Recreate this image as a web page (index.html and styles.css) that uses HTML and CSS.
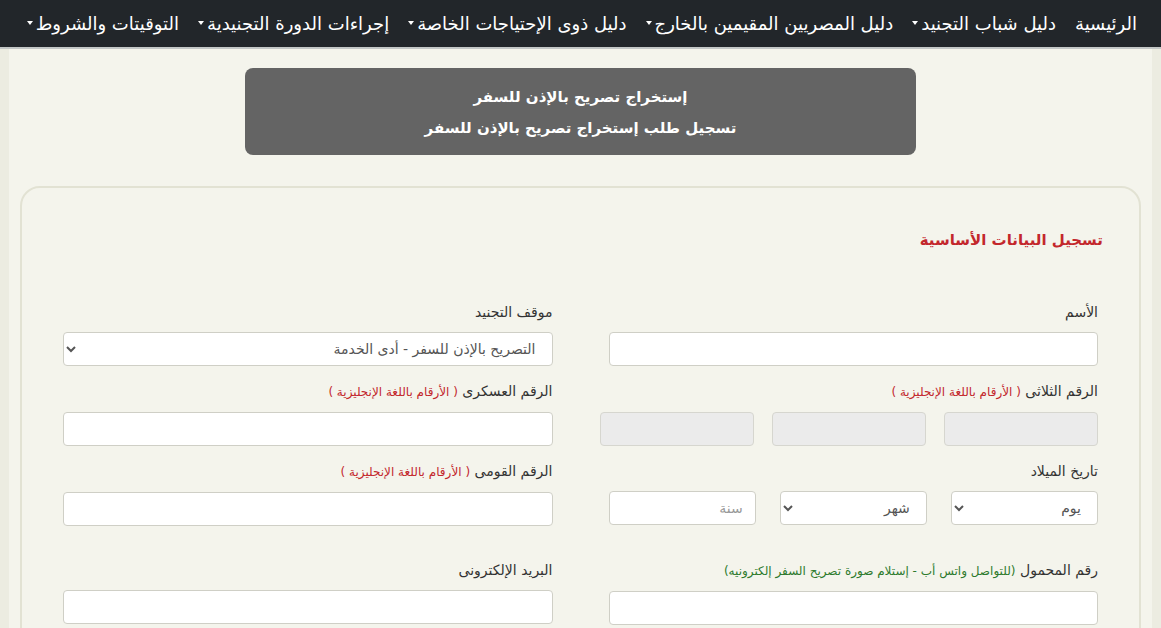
FILE: index.html
```html
<!DOCTYPE html>
<html lang="ar" dir="rtl">
<head>
  <meta charset="UTF-8">
  <meta name="viewport" content="width=device-width, initial-scale=1.0">
  <title>إستخراج تصريح بالإذن للسفر</title>
  <link rel="stylesheet" href="styles.css">
</head>
<body>
  <!-- القائمة العلوية -->
  <nav class="topbar">
    <ul class="menu">
      <li><a href="#">الرئيسية</a></li>
      <li><a href="#" class="dropdown">دليل شباب التجنيد</a></li>
      <li><a href="#" class="dropdown">دليل المصريين المقيمين بالخارج</a></li>
      <li><a href="#" class="dropdown">دليل ذوى الإحتياجات الخاصة</a></li>
      <li><a href="#" class="dropdown">إجراءات الدورة التجنيدية</a></li>
      <li><a href="#" class="dropdown">التوقيتات والشروط</a></li>
    </ul>
  </nav>

  <div class="page">
    <!-- عنوان الصفحة -->
    <div class="banner">
      <p>إستخراج تصريح بالإذن للسفر</p>
      <p>تسجيل طلب إستخراج تصريح بالإذن للسفر</p>
    </div>

    <!-- نموذج البيانات الأساسية -->
    <section class="card">
      <h3 class="card-title">تسجيل البيانات الأساسية</h3>

      <form class="form-grid">
        <div class="field">
          <label for="fullName">الأسم</label>
          <input type="text" id="fullName">
        </div>
        <div class="field">
          <label for="status">موقف التجنيد</label>
          <select id="status">
            <option>التصريح بالإذن للسفر - أدى الخدمة</option>
          </select>
        </div>

        <div class="field">
          <label>الرقم الثلاثى <span class="hint">( الأرقام باللغة الإنجليزية )</span></label>
          <div class="triple wide">
            <input type="text" disabled>
            <input type="text" disabled>
            <input type="text" disabled>
          </div>
        </div>
        <div class="field">
          <label for="militaryNo">الرقم العسكرى <span class="hint">( الأرقام باللغة الإنجليزية )</span></label>
          <input type="text" id="militaryNo">
        </div>

        <div class="field">
          <label>تاريخ الميلاد</label>
          <div class="triple">
            <select><option>يوم</option></select>
            <select><option>شهر</option></select>
            <input type="text" placeholder="سنة">
          </div>
        </div>
        <div class="field">
          <label for="nationalId">الرقم القومى <span class="hint">( الأرقام باللغة الإنجليزية )</span></label>
          <input type="text" id="nationalId">
        </div>

        <div class="field spaced">
          <label for="mobile">رقم المحمول <span class="hint green">(للتواصل واتس أب - إستلام صورة تصريح السفر إلكترونيه)</span></label>
          <input type="text" id="mobile">
        </div>
        <div class="field spaced">
          <label for="email">البريد الإلكترونى</label>
          <input type="email" id="email">
        </div>
      </form>
    </section>
  </div>
</body>
</html>
```

FILE: styles.css
```css
html, body {
  margin: 0;
  padding: 0;
}

body {
  font-family: "DejaVu Sans", "Noto Sans", sans-serif;
  background-color: #ecece1;
  color: #333;
  direction: rtl;
}

/* القائمة العلوية */
.topbar {
  background-color: #22262a;
  height: 47px;
  border-bottom: 2px solid #c3c7c6;
}

.menu {
  list-style: none;
  margin: 0;
  padding: 0 24px 0 0;
  display: flex;
  align-items: center;
  height: 47px;
  gap: 19px;
}

.menu a {
  color: #fff;
  text-decoration: none;
  font-size: 18px;
}

.menu a.dropdown::after {
  content: "";
  display: inline-block;
  margin-right: 3px;
  vertical-align: 5px;
  border-top: 4px solid #fff;
  border-left: 3px solid transparent;
  border-right: 3px solid transparent;
}

/* محتوى الصفحة */
.page {
  margin: 0 9px;
  padding: 19px 11px 0;
  background-color: #f4f4ec;
  min-height: 580px;
}

.banner {
  width: 671px;
  margin: 0 auto;
  padding: 14px 0 11px;
  background-color: #646464;
  border-radius: 8px;
  text-align: center;
  color: #fff;
  font-weight: bold;
  font-size: 15px;
}

.banner p {
  margin: 0;
  line-height: 31px;
}

.card {
  margin-top: 31px;
  padding: 40px 41px 30px;
  border: 2px solid #e2e2d3;
  border-radius: 20px;
}

.card-title {
  margin: 0 -5px 50px 0;
  color: #c3272c;
  font-size: 15px;
  font-weight: bold;
  line-height: 24px;
}

/* شبكة الحقول */
.form-grid {
  display: grid;
  grid-template-columns: 1fr 1fr;
  column-gap: 56px;
  row-gap: 15px;
}

.field label {
  display: block;
  font-size: 14px;
  line-height: 20px;
  margin-bottom: 10px;
  color: #333;
}

.hint {
  color: #c3272c;
  font-size: 12px;
}

.hint.green {
  color: #2d7a2d;
}

.field.spaced {
  margin-top: 19px;
}

input, select {
  box-sizing: border-box;
  width: 100%;
  height: 34px;
  padding: 4px 12px;
  border: 1px solid #cfcfc6;
  border-radius: 4px;
  background-color: #fff;
  font-family: inherit;
  font-size: 14px;
  color: #555;
}

input::placeholder {
  color: #999;
}

input:disabled {
  background-color: #ebebeb;
  border-color: #d6d6cf;
}

.triple {
  display: grid;
  grid-template-columns: 1fr 1fr 1fr;
  column-gap: 24px;
}

.triple.wide {
  margin-left: -9px;
  column-gap: 18px;
}
```
